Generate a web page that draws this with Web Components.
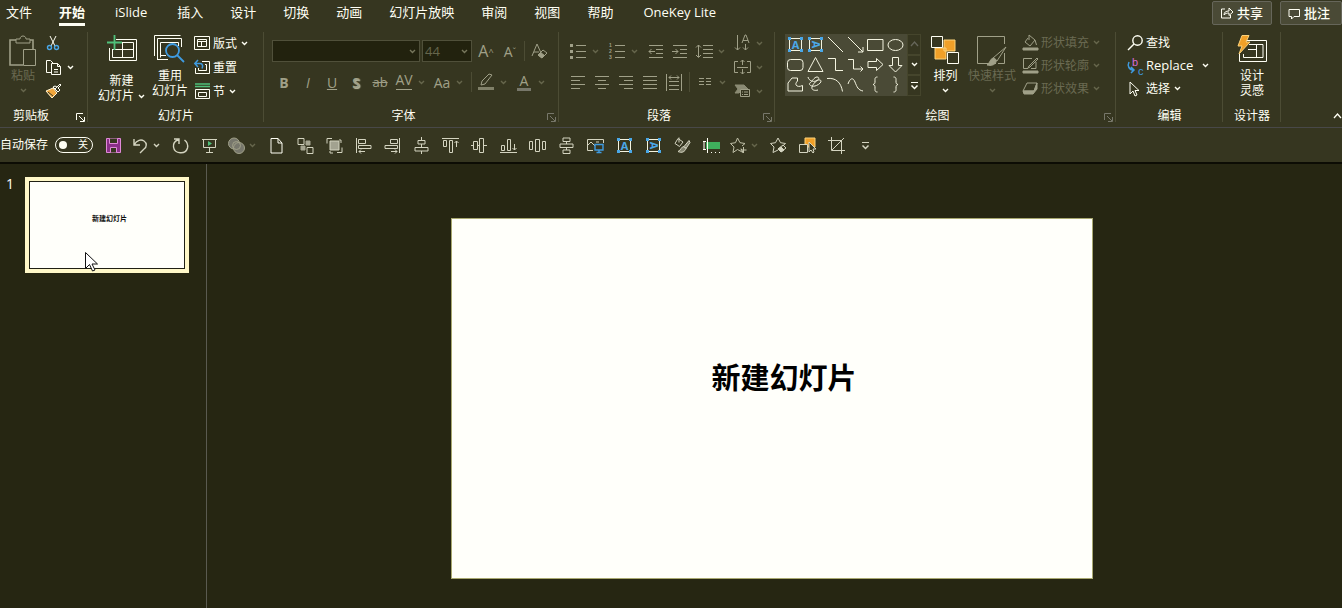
<!DOCTYPE html>
<html lang="zh-CN">
<head>
<meta charset="utf-8">
<title>新建幻灯片</title>
<style>
html,body{height:100%;margin:0}
body{--bar:#363620;background:#262612;color:#fffff4;font-family:"Open Sans","Noto Sans CJK SC",sans-serif;font-size:12px;overflow:hidden}
</style>
</head>
<body>
<slide-app></slide-app>
<script>
const A = (r) => `<path d="M2 2.500H15M2 14.500H15M2.500 2V15M14.500 2V15" stroke="#f4f4e0"/><g fill="#4aa8e8" stroke="none"><path d="M1 1h3v3H1zM13 1h3v3h-3zM1 13h3v3H1zM13 13h3v3h-3z"/><text x="8.500" y="12.500" font-size="11" font-weight="700" text-anchor="middle" ${r ? 'transform="rotate(90 8.500 8.500)"' : ''}>A</text></g>`;
const lines = (list) => `<path d="${list.map(([x, y, w]) => `M${x} ${y}.5h${w}`).join('')}"/>`;
const ICONS = {
  caret: [7, 5, '<path d="M1 1l2.500 2.500L6 1" stroke-width="1.400"/>'],
  launcher: [9, 9, '<path d="M.5 7V.5H7M3 3l5 5M8.500 4v4.500H4"/>'],
  up: [9, 6, '<path d="M1 5l3.500-4L8 5" stroke-width="1.300"/>'],
  more: [9, 9, '<path d="M1 1.500h7"/><path d="M1.500 4.500l3 3 3-3" stroke-width="1.500"/>'],
  paste: [30, 34, '<g stroke-width="1.600"><path d="M9 5H2v25h13M20 5h5v9"/></g><path d="M8 8V4h4c0-4 6-4 6 0h4v4z" fill="var(--bar)"/><path d="M15.500 14.500h12v16h-12z" fill="var(--bar)"/>'],
  cut: [16, 16, '<path d="M5 1l5 10M11 1L6 11"/><g stroke="#4aa8e8" stroke-width="1.400"><circle cx="4.500" cy="12.500" r="2"/><circle cx="11.500" cy="12.500" r="2"/></g>'],
  copy: [17, 17, '<path d="M6.500 13.500h-5v-12h4l3 3M6.500 4.500h6l3 3v8h-9zM12.500 4.500v3h3M9 10.500h4M9 13h4"/>'],
  brush: [17, 16, '<path d="M15 1l-5 5M8 4l5 5 2-2-2-2 3-3-1-1-3 3-2-1z" fill="var(--bar)"/><path d="M8 5L1 8l6 7 5-5z" fill="#f0a63c" stroke="#fff3d0"/><path d="M3 9l5 4" stroke="var(--bar)"/>'],
  newslide: [30, 28, '<path d="M9 4.500h20.500v21h-27V13M5.500 14v8.500h21v-15H13M15.500 8v14M6 14.500h20"/><path d="M7.500 0v15M0 7.500h15" stroke="#4fc07a" stroke-width="1.800"/>'],
  reuse: [32, 30, '<path d="M.5 21V.5h26M3.500 24V3.500h24V12M6.500 22.500V7.500h18V11M3 24.500h11M6 20.500h6"/><g stroke="#3f9be0" stroke-width="1.800"><circle cx="18.500" cy="15.500" r="6.500" fill="var(--bar)"/><path d="M23 20l7 7"/></g>'],
  layout: [17, 15, '<path d="M.5.5h15v13H.5zM3.500 3.500h9v7h-9zM3.500 5.500h9M7.500 5.500v5"/>'],
  reset: [17, 16, '<path d="M8 2.500h7.500v12H1.500V9M11 5.500h1.500v6h-8V9"/><path d="M1 4.500h5c3 0 3 3 2 5M4 1L.8 4.500 4 8" stroke="#3f9be0" stroke-width="1.500"/>'],
  section: [17, 17, '<path d="M1.500 6.500h14v9h-14zM4.500 9.500h8v4h-8z"/><path d="M1 1h15M1 3.500h15" stroke="#4fc07a" stroke-width="1.300"/>'],
  clear: [18, 18, '<path d="M2 14L7 2l4 9M4 10h5"/><path d="M8 13l5-5 4 3-5 5z"/><path d="M8 13l2.500-2.500 4 3L12 16z" fill="currentColor"/>'],
  bullets: [16, 16, lines([[6,2,10],[6,8,10],[6,14,10]]) + '<path d="M0 1h3v3H0zM0 7h3v3H0zM0 13h3v3H0z" fill="currentColor" stroke="none"/>'],
  numbers: [16, 18, lines([[6,3,10],[6,9,10],[6,15,10]]) + '<g fill="currentColor" stroke="none" font-size="5" font-weight="700" font-family="Liberation Sans"><text x="0" y="5">1</text><text x="0" y="11">2</text><text x="0" y="17">3</text></g>'],
  outdent: [16, 16, lines([[1,2,14],[8,6,7],[8,10,7],[1,14,14]]) + '<path d="M1 8.500h6M3.500 6L1 8.500 3.500 11"/>'],
  indent: [16, 16, lines([[1,2,14],[8,6,7],[8,10,7],[1,14,14]]) + '<path d="M0 8.500h6M3.500 6L6 8.500 3.500 11"/>'],
  spacing: [17, 16, lines([[7,2,10],[7,6,10],[7,10,10],[7,14,10]]) + '<path d="M2.500 2v12M0 4.500L2.500 2 5 4.500M0 12l2.500 2.500L5 12"/>'],
  left: [16, 16, lines([[1,2,14],[1,6,9],[1,10,14],[1,14,9]])],
  center: [16, 16, lines([[1,2,14],[4,6,8],[1,10,14],[4,14,8]])],
  right: [16, 16, lines([[1,2,14],[6,6,9],[1,10,14],[6,14,9]])],
  justify: [16, 16, lines([[1,2,14],[1,6,14],[1,10,14],[1,14,14]])],
  distribute: [16, 17, lines([[3,7,10],[3,11,10],[3,15,10]]) + '<path d="M.5 0v17M15.500 0v17M3 3.500h10M5 1.500l-2 2 2 2M11 1.500l2 2-2 2"/>'],
  columns: [14, 10, lines([[1,1,5],[1,4,5],[1,7,5],[8,1,5],[8,4,5],[8,7,5]])],
  direction: [16, 18, '<path d="M3.500 1v15M1 13.500L3.500 16 6 13.500M11.500 10v6M9 13.500l2.500 2.500 2.500-2.500M8 9l3-8h1l3 8M9 6.500h5"/>'],
  valign: [17, 16, '<path d="M4 2.500H.5v11H4M13 2.500h3.500v11H13M3 8.500h11M8.500 1v5M6.500 3l2-2 2 2M8.500 10v5M6.500 13l2 2 2-2"/>'],
  smartart: [17, 14, '<path d="M1 1h9l4 4H9l-4 4H1l3-4z" fill="currentColor" opacity=".8"/><path d="M6.500 5.500h9v7h-9z" fill="var(--bar)"/><path d="M8 8h1M10 8h4M8 10.500h1M10 10.500h4"/>'],
  highlight: [18, 18, '<path d="M12 1l3 1-7 9-4 1 1-4z"/><path d="M1 14h16v3H1z" fill="currentColor" stroke="none" opacity=".7"/>'],
  textA: [17, 17, A(false)], textV: [17, 17, A(true)],
  line: [17, 17, '<path d="M1 1l15 15"/>'],
  arrow: [17, 17, '<path d="M1 1l15 15M16 11v5h-5"/>'],
  rect: [17, 17, '<path d="M.5 3.500h15.500v11H.5z"/>'],
  oval: [17, 17, '<ellipse cx="8.500" cy="9" rx="7.500" ry="5.500"/>'],
  round: [17, 17, '<rect x=".5" y="3.500" width="15.500" height="11" rx="3"/>'],
  tri: [17, 17, '<path d="M8.500 1.500l7.500 14H1z"/>'],
  elbow: [17, 17, '<path d="M1 2.500h7.500v12H16"/>'],
  elbowArrow: [17, 17, '<path d="M1 3.500h5.500v9.500H16M13.500 10.500L16 13l-2.500 2.500"/>'],
  arrowR: [17, 17, '<path d="M1 5.500h8.500V2.500L16 8.500l-6.500 6v-3H1z"/>'],
  arrowD: [17, 17, '<path d="M5.500 1.500h6v8H15L8.500 16 2 9.500h3.500z"/>'],
  freeform: [17, 17, '<path d="M1 7l4-5h5.500v3c-4 4 0 7 5 4.500v5.500H1z"/>'],
  scribble: [17, 17, '<path d="M1 1c1 4 5 5 8 4s4-4 1-4-5 5-7 6 1 4 5 3 8-5 5-6-7 4-8 7 3 4 6 3"/>'],
  arc: [17, 17, '<path d="M0 2.500c9-1 14 4 15.500 13"/>'],
  curve: [17, 17, '<path d="M1 8C3 2 6 1 8 6s3 8 8 9"/>'],
  braceL: [17, 17, '<path d="M10.500 1C7.500 1 8 3 8 5s0 3-2 3.500C8 9 8 10 8 12s-.5 4 2.500 4"/>'],
  braceR: [17, 17, '<path d="M6.500 1C9.500 1 9 3 9 5s0 3 2 3.500C9 9 9 10 9 12s.5 4-2.500 4"/>'],
  arrange: [29, 30, '<path d="M13 5h11v11H13zM4 13h11v11H4z" fill="#f0a028" stroke="#fbd27a"/><path d="M.5 1.500h11v11H.5zM16.500 17.500h11v11h-11z" fill="var(--bar)" stroke="#fffff4"/>'],
  styles: [31, 32, '<path d="M19 28.500H.5v-27h27V9M27.500 18v10.500H21"/><path d="M29 12l-9 14-4-3L29 12z" fill="var(--bar)"/><path d="M16 23c2 0 4 2 3 4-1 3-5 4-9 3 3-2 3-6 6-7z" fill="currentColor"/>'],
  fill: [17, 17, '<path d="M6 4l-3 4 5 4 5-6-6-5v5M13 6l1.500 5"/><path d="M1 14h15v2H1z" fill="currentColor"/>'],
  outline: [17, 17, '<path d="M10 1.500H1.500v10H6M14 5v6.500H9"/><path d="M15 1L7 9l-1 2 2-1 8-8z"/><path d="M1 14h15v2H1z" fill="currentColor"/>'],
  effect: [17, 14, '<path d="M5 1h10l-3 8H1z"/><path d="M15 1v6l-4 5H2l-1-3h11z" fill="currentColor"/>'],
  find: [17, 16, '<g stroke-width="1.400"><circle cx="10.500" cy="5.500" r="4.700"/><path d="M7 9l-6 6"/></g>'],
  replace: [17, 18, '<g stroke="none" font-size="11" font-family="Liberation Sans"><text x="5" y="9" fill="#d66ad6">b</text><text x="11" y="18" fill="#3f9be0">c</text></g><path d="M2 5c-2 4 0 8 5 8M4 10l3 3-3 3" stroke="#3f9be0" stroke-width="1.500"/>'],
  select: [17, 16, '<path d="M3 1v12l3-3 2 5 2-1-2-4.500h4z"/>'],
  ideas: [31, 30, '<path d="M8 5.500h21.500v21h-27V19M12 9.500h14v13H6.500V19M19.500 9.500v13M11 14.500h8"/><path d="M5 .5h7L9 7h4L2 19l3-8H1z" fill="#f0a028" stroke="#fbd27a"/>'],
  share: [14, 14, '<path d="M5 3H1.500v9h9V9M4 9c0-3 2-4 5-4V2l4 4-4 3.500V7C7 7 5 7.500 4 9z"/>'],
  comment: [13, 13, '<path d="M1 2.500h10.500v7H6l-2.500 2.500V9.500H1z"/>'],
  save: [17, 17, '<path d="M1.500 1.500h14v14h-14z" fill="#8a2f88" stroke="#e08ad8"/><path d="M4.500 1.500v5h8v-5M5.500 15.500v-5h6v5" fill="var(--bar)" stroke="#e08ad8"/>'],
  undo: [17, 17, '<path d="M2 2v6h6M2 8c3-5 7-6 10-4s3 6 0 8l-4 4" stroke-width="1.400"/>'],
  redo: [17, 17, '<path d="M2 2h5v5M6.500 2.500C3 4 1 7 1.500 10c1 7 12 8 14 1 .8-3.500-.5-6-3-8" stroke-width="1.400"/>'],
  present: [17, 17, '<path d="M1 2.500h15M2.500 3v7.500h12V3M8.500 10.500V15M5 15.500h7"/><path d="M7 4l4 2.500L7 9z" fill="#4fc07a" stroke="none"/>'],
  circles: [17, 17, '<g fill="#77776c"><circle cx="6" cy="6.500" r="5.500"/><circle cx="11" cy="11" r="5.500"/></g><circle cx="8.500" cy="8.500" r="4"/>'],
  page: [17, 17, '<path d="M3 1.500h7l4 4.500v10H3zM10 1.500V6h4" stroke="#fffff4"/>'],
  group: [17, 17, '<path d="M1 1.500h6v6H1zM10 10.500h6v6h-6z"/><path d="M9 4h4v4H9zM4 9h4v4H4z" fill="currentColor" opacity=".7"/>'],
  front: [17, 17, '<path d="M4 4h9v9H4z" fill="#a2a290"/><path d="M1 6.500v-5h5M11 15.500h5v-5M4 14v2h3M13 3h2v3"/>'],
  alignL: [17, 17, '<path d="M1.500 1v15M3.500 2.500h7v4h-7zM3.500 8.500H16v3H3.500zM4 14.500h6M6 12.500l-2 2 2 2"/>'],
  alignR: [17, 17, '<path d="M15.500 1v15M6.500 2.500h7v4h-7zM1 8.500h12.500v3H1zM7 14.500h6M11 12.500l2 2-2 2"/>'],
  alignC: [17, 17, '<path d="M8.500 0v3M8.500 7v3M8.500 14v3M5 3.500h7v3.500H5zM2 10.500h13v3.500H2z"/>'],
  alignT: [17, 17, '<path d="M0 1.500h17M1.500 3.500h3v6h-3zM7.500 3.500h3v12h-3zM14.500 4v6M12.500 6l2-2 2 2"/>'],
  alignM: [17, 17, '<path d="M0 8.500h2M6 8.500h2M12 8.500h4M2.500 4.500h4v8h-4zM8.500 1.500h4v14h-4z"/>'],
  alignB: [17, 17, '<path d="M0 15.500h17M1.500 8.500h3v5h-3zM7.500 2.500h3v11h-3zM14.500 7v6M12.500 11l2 2 2-2"/>'],
  distH: [17, 17, '<path d="M.5 4.500h3v8h-3zM6.500 2.500h4v12h-4zM13.500 4.500h3v8h-3z"/>'],
  distV: [17, 17, '<path d="M5 1h7v3.500H5zM2 7h13v3.500H2zM5 13h7v3.500H5zM8.500 4.500V7M8.500 10.500V13"/>'],
  picture: [17, 17, '<path d="M6 13.500H.5v-11h16V6M1 8l3-3 4 4M9 5h3"/><path d="M8 7.500h8v5.500H8zM12 13v2.500M9.500 15.500h5" stroke="#3f9be0" stroke-width="1.400"/>'],
  painter: [17, 17, '<path d="M4 1.500L9 5 5.500 9.500 1 6.500zM5 .5v5"/><path d="M15 3.500l-5 6 2 2 4-6zM10 9.500c-3 0-3 4-6 5 4 2 7 0 8-3z" fill="currentColor" fill-opacity=".5"/>'],
  ruler: [17, 17, '<path d="M3 5h14v7H3z" fill="#3fae5c" stroke="none"/><path d="M4.500 1v15M0 4.500h3M0 12.500h3M1 5v7M8 15.500h1M12 15.500h1M16 15.500h1" stroke="#fffff4"/>'],
  star: [17, 17, '<path d="M11 11.500l2 4-5.500-3L3 15.500l1-5.500L.5 6.500l5-.8L7.500 1l2.500 4.700 5 .8-3 2.500M13.500 10v6M10.500 13h6" stroke="#c0c0a8"/>'],
  starPaint: [17, 17, '<path d="M8 13l-5 2.500L4 10 .5 6.500l5-.8L8 1l2.500 4.700 5 .8-3 2.500"/><path d="M8 12l5-4 3 3-5 4z"/><path d="M8 12l3-2 3 3-3 2z" fill="currentColor"/>'],
  pane: [17, 17, '<path d="M6 1h10v9H6z" fill="#f0a028" stroke="#fbd27a"/><path d="M.5 7.500h8v8h-8z" fill="var(--bar)"/><path d="M10 5v10l2-2 2 3 1-1-1-3h3z" fill="var(--bar)"/>'],
  crop: [17, 17, '<path d="M3.500 0v13.500H17M0 3.500h13.500V17M16 1L4 13"/>']
};

function define(name, css, html) {
  const tpl = document.createElement('template');
  customElements.define(name, class extends HTMLElement {
    constructor() { super(); this.attachShadow({ mode: 'open' }); }
    connectedCallback() {
      if (this.shadowRoot.childNodes.length) return;
      tpl.innerHTML = `<style>*{box-sizing:border-box}${css}</style>` + (typeof html === 'function' ? html(this) : html);
      this.shadowRoot.append(tpl.content.cloneNode(true));
    }
  });
}

define('ui-icon', ':host{display:inline-flex;flex:none}svg{display:block;overflow:visible;font-family:"Open Sans",sans-serif}', (el) => {
  const [w, h, body] = ICONS[el.getAttribute('name')];
  return `<svg width="${w}" height="${h}" viewBox="0 0 ${w} ${h}" fill="none" stroke="currentColor" aria-hidden="true">${body}</svg>`;
});

const buttonReset = 'button{font:inherit;color:inherit;background:none;border:0;margin:0;padding:0}';

/* kind: tool (glyph box), row (icon + caption), large (icon above caption), quick (toolbar) */
define('rb-button', `
:host{display:block;flex:none}
${buttonReset}
button{display:flex;align-items:center;white-space:nowrap;line-height:15px}
button:disabled{color:#6a6a52}
button:disabled ui-icon.main,button:disabled .glyph{color:#a0a088}
button:disabled .caret{color:#66664c}
.tool .glyph{display:flex;width:24px;height:24px;align-items:center;justify-content:center;font-size:14px}
.tool .caret{width:10px;justify-content:center}
.row{height:var(--row,24px)}
.row .pic{display:flex;width:17px;margin-right:2px;justify-content:center}
.row .caret{margin-left:var(--caret-gap,4px)}
.large{flex-direction:column}
.large .pic{display:flex;height:var(--pic,37px);align-items:flex-start;padding-top:4px;justify-content:center}
.large .caption{text-align:center}
.large .caret{vertical-align:middle;margin-left:4px}
.large .below{display:flex;height:15px;align-items:center;justify-content:center}
.large .below .caret{margin:0}
.quick{height:29px;padding:0 6px}
.quick.drop{padding-left:4px}
.quick .glyph{display:flex;width:17px;justify-content:center}
.quick .caret{margin-left:4px}
`, (el) => {
  const kind = el.getAttribute('kind') || 'tool', icon = el.getAttribute('icon'), c = el.getAttribute('caret');
  const dis = el.hasAttribute('disabled') ? 'disabled' : '', label = el.getAttribute('label');
  const pic = icon ? `<ui-icon class="main" name="${icon}"></ui-icon>` : '';
  const caret = c !== null ? '<ui-icon class="caret" name="caret"></ui-icon>' : '';
  const open = `<button type="button" class="${kind} ${caret ? 'drop' : ''}" ${dis} ${label ? `aria-label="${label}"` : ''}>`;
  if (kind === 'large') return `${open}<span class="pic">${pic}</span><span class="caption"><slot></slot>${c === 'inline' ? caret : ''}</span>${c === 'below' ? `<span class="below">${caret}</span>` : ''}</button>`;
  if (kind === 'row') return `${open}<span class="pic">${pic}</span><slot></slot>${caret}</button>`;
  return `${open}<span class="glyph">${pic}<slot></slot></span>${caret}</button>`;
});

define('rb-group', `
:host{display:flex;flex-direction:column;flex:none;height:100px;padding-top:4px;position:relative}
:host::after{content:"";position:absolute;right:0;top:5px;bottom:5px;border-right:1px solid #4c4c34}
.body{display:flex;height:73px;align-items:flex-start}
footer{display:flex;height:23px;align-items:center;line-height:16px}
span{flex:1;text-align:center;padding-right:var(--label-end,0)}
${buttonReset}
button{width:16px;display:flex;justify-content:center;padding-top:4px}
button:disabled{color:#77776a}
`, (el) => {
  const l = el.getAttribute('launcher');
  return `<div class="body"><slot></slot></div><footer><span>${el.getAttribute('name')}</span>${l === null ? '' : `<button type="button" aria-label="${el.getAttribute('name')}" ${l === 'off' ? 'disabled' : ''}><ui-icon name="launcher"></ui-icon></button>`}</footer>`;
});

define('app-tabs', `
:host{display:flex;height:27px;align-items:flex-start;justify-content:space-between;font-size:13px}
nav{display:flex;gap:27px;padding-left:6px}
a{color:inherit;text-decoration:none;line-height:18px;padding-top:3px;height:26px;border-bottom:3px solid transparent;white-space:nowrap}
a.latin{padding-left:3px;padding-right:3px}
a[aria-current]{font-weight:700;border-color:#fffff4}
.actions{display:flex;gap:8px}
${buttonReset}
button{display:flex;height:24px;margin-top:1px;align-items:center;gap:3px;padding:0 8px 0 7px;font-weight:500;border:1px solid #66665a;border-radius:2px;background:#4a4a36;line-height:18px;white-space:nowrap}
.last{padding-right:11px}
`, `<nav>${['文件', '开始', 'iSlide', '插入', '设计', '切换', '动画', '幻灯片放映', '审阅', '视图', '帮助', 'OneKey Lite'].map((t) => `<a href="#" ${t === '开始' ? 'aria-current="page"' : ''} class="${/[A-Za-z]/.test(t) ? 'latin' : ''}">${t}</a>`).join('')}</nav>
<div class="actions"><button type="button"><ui-icon name="share"></ui-icon>共享</button><button type="button" class="last"><ui-icon name="comment"></ui-icon>批注</button></div>`);

define('font-tools', `
:host{display:block;padding:8px 0 0 8px}
div{display:flex;align-items:center;height:24px}
.second{margin-top:7px}
label{display:flex;position:relative;align-items:center;color:#77775c}
label ui-icon{position:absolute;right:4px}
input{font:inherit;font-size:13px;color:#66664c;height:22px;background:#22220e;border:1px solid #50503a;padding:0 2px;outline:0}
.face{width:148px}.size{width:50px}
label+label{margin-left:2px;margin-right:2px}
.rule{width:1px;height:20px;background:#4c4c34;flex:none}
b,i,u,s,span{font-size:14px}
.shadow{font-weight:700;text-shadow:1px 1px 1px #bbbba0}
.sp{display:grid;justify-items:center;font-size:14px;line-height:12px}
.sp::after{content:"";width:16px;height:1px;background:currentColor;margin-top:3px}
.fc{border-bottom:3px solid #77776a;line-height:15px;padding:0 3px}
sup{font-size:9px;line-height:1}
.strike{font-size:13px}
.big{font-size:16px}
`, `<div><label><input class="face" aria-label="字体" disabled><ui-icon name="caret"></ui-icon></label><label><input class="size" aria-label="字号" value="44" disabled><ui-icon name="caret"></ui-icon></label>
<rb-button disabled><span class="big">A</span><sup>^</sup></rb-button><rb-button disabled><span>A</span><sup>ˇ</sup></rb-button><span class="rule" style="margin:0 2px"></span><rb-button disabled icon="clear" label="清除格式"></rb-button></div>
<div class="second"><rb-button disabled><b>B</b></rb-button><rb-button disabled><i>I</i></rb-button><rb-button disabled><u>U</u></rb-button><rb-button disabled><span class="shadow">S</span></rb-button><rb-button disabled><s class="strike">ab</s></rb-button><rb-button disabled caret><span class="sp">AV</span></rb-button><rb-button disabled caret style="margin-left:4px"><span>Aa</span></rb-button><span class="rule" style="margin:0 2px 0 7px"></span><rb-button disabled caret icon="highlight" label="突出显示"></rb-button><rb-button disabled caret style="margin-left:4px"><span class="fc">A</span></rb-button></div>`);

define('paragraph-tools', `
:host{display:flex;padding-left:7px}
.main{padding-top:8px;width:164px}
.main>div{display:flex;align-items:center;height:24px}
.main>div+div{margin-top:7px}
.rule{width:1px;height:20px;background:#4c4c34;margin:0 3px}
.gap{margin-right:5px}
`, `<div class="main"><div>${['bullets', 'numbers', 'outdent', 'indent', 'spacing'].map((n, i) => `<rb-button disabled icon="${n}" label="${n}" ${i < 2 ? 'caret class="gap"' : i === 4 ? 'caret' : ''}></rb-button>`).join('')}</div>
<div>${['left', 'center', 'right', 'justify', 'distribute'].map((n) => `<rb-button disabled icon="${n}" label="${n}"></rb-button>`).join('')}<span class="rule"></span><rb-button disabled icon="columns" label="columns" caret></rb-button></div></div>
<div>${['direction', 'valign', 'smartart'].map((n) => `<rb-button disabled caret icon="${n}" label="${n}"></rb-button>`).join('')}</div>`);

define('shape-gallery', `
:host{display:flex;margin:3px 10px 0}
.grid{display:grid;grid-template-columns:repeat(6,20px);grid-auto-rows:20px;padding:0 2px 2px 0;background:#4a4a36;color:#f4f4e0}
.scroll{display:grid;grid-template-rows:repeat(3,1fr);width:14px}
${buttonReset}
button{display:grid;place-items:center}
.scroll button{border:1px solid #45452c}
.scroll button:disabled{color:#66665a}
`, `<div class="grid">${['textA', 'textV', 'line', 'arrow', 'rect', 'oval', 'round', 'tri', 'elbow', 'elbowArrow', 'arrowR', 'arrowD', 'freeform', 'scribble', 'arc', 'curve', 'braceL', 'braceR'].map((n) => `<button type="button" aria-label="${n}"><ui-icon name="${n}"></ui-icon></button>`).join('')}</div>
<div class="scroll"><button type="button" disabled aria-label="up"><ui-icon name="up"></ui-icon></button><button type="button" aria-label="down"><ui-icon name="caret"></ui-icon></button><button type="button" aria-label="more"><ui-icon name="more"></ui-icon></button></div>`);

define('app-ribbon', `
:host{display:flex;height:101px;border-bottom:1px solid #484848;position:relative}
.tight{--row:23px}
.stack{display:flex;flex-direction:column;align-items:flex-start}
.collapse{position:absolute;right:0;bottom:4px}
${buttonReset}
`, `
<rb-group name="剪贴板" launcher style="width:88px;--label-end:10px">
  <rb-button kind="large" icon="paste" caret="below" disabled style="width:30px;margin-left:8px">粘贴</rb-button>
  <div class="stack" style="margin-left:3px"><rb-button icon="cut" label="剪切"></rb-button><rb-button icon="copy" label="复制" caret></rb-button><rb-button icon="brush" label="格式刷"></rb-button></div>
</rb-group>
<rb-group name="幻灯片" style="width:176px">
  <rb-button kind="large" icon="newslide" caret="inline" style="--pic:42px;margin-left:10px">新建<br>幻灯片</rb-button>
  <rb-button kind="large" icon="reuse" style="margin-left:7px">重用<br>幻灯片</rb-button>
  <div class="stack" style="margin-left:6px"><rb-button kind="row" icon="layout" caret>版式</rb-button><rb-button kind="row" icon="reset">重置</rb-button><rb-button kind="row" icon="section" caret>节</rb-button></div>
</rb-group>
<rb-group name="字体" launcher="off" style="width:295px"><font-tools></font-tools></rb-group>
<rb-group name="段落" launcher="off" style="width:216px"><paragraph-tools></paragraph-tools></rb-group>
<rb-group name="绘图" launcher="off" style="width:341px">
  <shape-gallery></shape-gallery>
  <rb-button kind="large" icon="arrange" caret="below">排列</rb-button>
  <rb-button kind="large" icon="styles" caret="below" disabled style="margin-left:8px">快速样式</rb-button>
  <div class="stack tight" style="margin-left:6px"><rb-button kind="row" icon="fill" caret disabled>形状填充</rb-button><rb-button kind="row" icon="outline" caret disabled>形状轮廓</rb-button><rb-button kind="row" icon="effect" caret disabled>形状效果</rb-button></div>
</rb-group>
<rb-group name="编辑" style="width:107px">
  <div class="stack tight" style="margin-left:11px"><rb-button kind="row" icon="find">查找</rb-button><rb-button kind="row" icon="replace" caret style="--caret-gap:9px"><span style="font-size:13px">Replace</span></rb-button><rb-button kind="row" icon="select" caret>选择</rb-button></div>
</rb-group>
<rb-group name="设计器" style="width:58px"><rb-button kind="large" icon="ideas" style="margin:0 auto">设计<br>灵感</rb-button></rb-group>
<button type="button" class="collapse" aria-label="collapse"><ui-icon name="up"></ui-icon></button>`);

define('quick-bar', `
:host{display:flex;align-items:center;height:34px;color:#d4d4c0}
label{display:flex;align-items:center;gap:7px;color:#fffff4;line-height:16px;margin-right:6px}
.switch{display:flex;position:relative;width:38px;height:16px}
input{appearance:none;margin:0;width:38px;height:16px;border:1px solid #fffff4;border-radius:8px}
.switch::before{content:"";position:absolute;left:4px;top:4px;width:8px;height:8px;border-radius:50%;background:#fffff4}
.switch span{position:absolute;right:5px;top:0;font-size:10px;line-height:15px}
`, `<label>自动保存<span class="switch"><input type="checkbox" role="switch"><span>关</span></span></label>
${['save', 'undo+', 'redo', 'present', 'circles-', 'page', 'group', 'front', 'alignL', 'alignR', 'alignC', 'alignT', 'alignM', 'alignB', 'distH', 'distV', 'picture', 'textA', 'textV', 'painter', 'ruler', 'star-', 'starPaint', 'pane', 'crop', 'more'].map((s) => {
  const n = s.replace(/[+-]/, '');
  return `<rb-button kind="quick" icon="${n}" label="${n}" ${s !== n ? 'caret' : ''} ${s.endsWith('-') ? 'disabled' : ''}></rb-button>`;
}).join('')}`);

define('slide-thumb', `
:host{display:flex;padding:13px 17px 0 6px;gap:13px}
.no{font-size:14px;line-height:14px;width:6px}
.frame{flex:1;height:96px;padding:4px;background:#fff8c8;position:relative}
.page{height:100%;border:1px solid #202014;background:#fffffa;color:#101010;display:flex;align-items:center;justify-content:center;padding:0 0 12px 5px;font-size:7px;font-weight:700;line-height:10px}
svg{position:absolute;left:60px;top:75px}
`, `<span class="no">1</span><div class="frame"><div class="page"><slot></slot></div>
<svg width="13" height="20" viewBox="0 0 13 20" fill="#fff" stroke="#111"><path d="M.5.500v16l4-4 3 6.500 2.500-1-3-6h5.500z"/></svg></div>`);

define('slide-stage', `
:host{display:flex;flex:1;justify-content:center;align-items:center;padding:24px 5px 0 0;min-width:0}
article{width:57%;max-width:642px;aspect-ratio:642/361;background:#fffffa;border:1px solid #a8a870;display:flex;align-items:center;justify-content:center;padding:0 0 40px 24px}
h1{margin:0;font-size:29px;line-height:40px;font-weight:700;color:#000;white-space:nowrap}
`, '<article><h1><slot></slot></h1></article>');

define('slide-app', `
:host{display:flex;flex-direction:column;height:100vh}
header{background:var(--bar);border-bottom:2px solid #0c0c04;flex:none}
main{display:flex;flex:1;min-height:0}
aside{width:207px;flex:none;border-right:1px solid #5a5a50}
`, `<header><app-tabs></app-tabs><app-ribbon></app-ribbon><quick-bar></quick-bar></header>
<main><aside><slide-thumb>新建幻灯片</slide-thumb></aside><slide-stage>新建幻灯片</slide-stage></main>`);
</script>
</body>
</html>
